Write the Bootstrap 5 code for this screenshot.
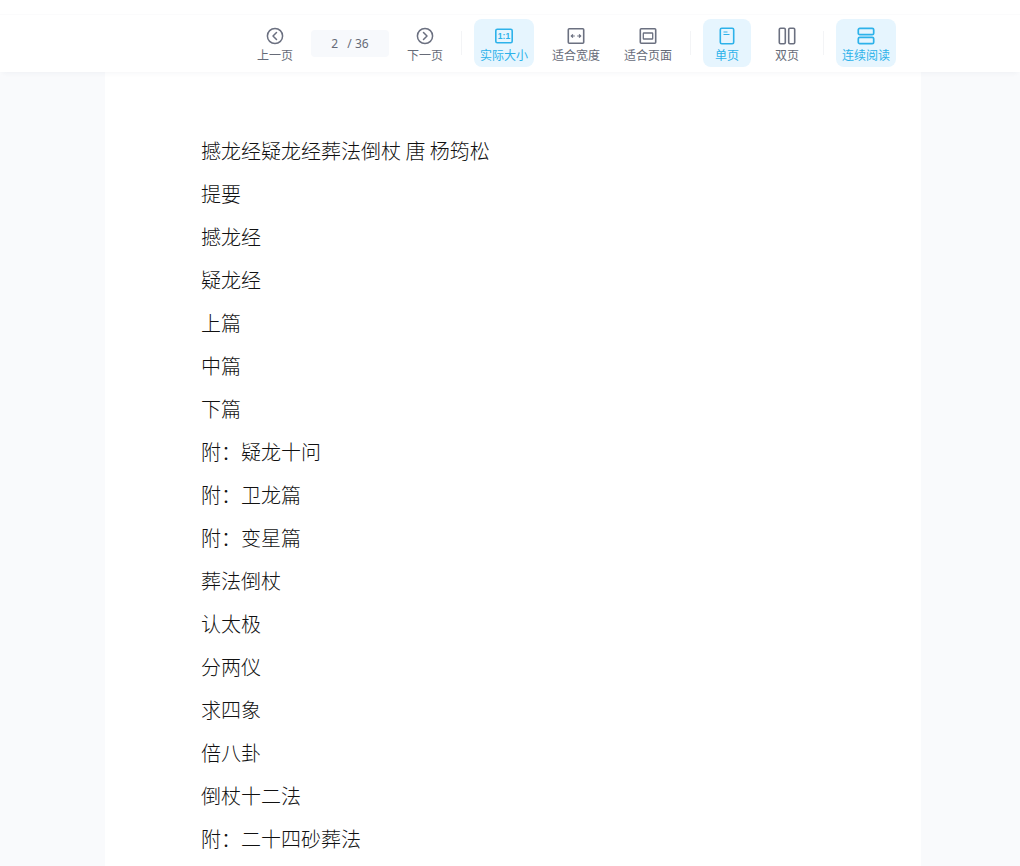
<!DOCTYPE html>
<html lang="zh-CN">
<head>
<meta charset="utf-8">
<title>阅读</title>
<link href="https://cdn.jsdelivr.net/npm/bootstrap@5.3.0/dist/css/bootstrap.min.css" rel="stylesheet">
<style>
html,body{height:866px;overflow:hidden}
body{background:#f9fafc;font-family:"Liberation Sans","Noto Sans CJK SC",sans-serif}
.top-strip{height:15px;background:#fff;border-bottom:1px solid #fbfbfc}
.tool-bar{height:57px;background:#fff;padding-right:124px;padding-top:4px;gap:12px;position:relative;z-index:2;box-shadow:0 4px 5px -3px rgba(40,60,90,.05)}
.tool-btn{min-width:48px;height:48px;padding:7px 6px 0;border-radius:8px;color:#666b78;font-size:12px;line-height:14px;border:0;background:none;font-family:"Noto Sans CJK SC",sans-serif}
.tool-btn svg{display:block;width:20px;height:20px;margin-bottom:2px}
.tool-btn.is-on{background:#e6f5fe;color:#2db2ea}
.tool-btn span{white-space:nowrap}
.page-box{width:78px;height:27px;background:#f7f9fc;border-radius:4px;font-family:"Noto Sans",sans-serif;font-size:12px;color:#666b78;margin-top:11px;white-space:pre}
.tool-sep{width:1px;height:24px;background:#f3f4f6;margin-top:12px}
.icon-label{font-family:"Liberation Sans",sans-serif;font-size:8.500px;font-weight:700;fill:#2db2ea;stroke:none}
.doc-sheet{width:816px;margin-left:105px;height:794px;background:#fff;padding:64px 0 0 96px;overflow:hidden}
.doc-sheet p{font-family:"Noto Sans CJK SC",sans-serif;font-size:20px;font-weight:300;line-height:29px;margin:0 0 14px;color:#111}
</style>
</head>
<body>
<div class="top-strip"></div>
<div class="tool-bar d-flex justify-content-end align-items-start">
  <button class="tool-btn d-flex flex-column align-items-center">
    <svg viewBox="0 0 20 20" fill="none" stroke="#6b7080" stroke-width="1.5"><circle cx="10" cy="10" r="7.600"/><path d="M11.500 6.500 8 10l3.500 3.500" stroke-linecap="round" stroke-linejoin="round"/></svg>
    <span>上一页</span>
  </button>
  <div class="page-box d-flex align-items-center justify-content-center">2   / 36</div>
  <button class="tool-btn d-flex flex-column align-items-center">
    <svg viewBox="0 0 20 20" fill="none" stroke="#6b7080" stroke-width="1.5"><circle cx="10" cy="10" r="7.600"/><path d="M8.500 6.500 12 10l-3.500 3.500" stroke-linecap="round" stroke-linejoin="round"/></svg>
    <span>下一页</span>
  </button>
  <div class="tool-sep"></div>
  <button class="tool-btn is-on d-flex flex-column align-items-center">
    <svg viewBox="0 0 20 20" fill="none" stroke="#2db2ea" stroke-width="1.600"><rect x="1.800" y="3.300" width="16.400" height="13.400" rx="1.500"/><text class="icon-label" x="10" y="13" text-anchor="middle">1:1</text></svg>
    <span>实际大小</span>
  </button>
  <button class="tool-btn d-flex flex-column align-items-center">
    <svg viewBox="0 0 20 20" fill="none" stroke="#6b7080" stroke-width="1.600"><rect x="2.300" y="2.800" width="15.400" height="14.400" rx="1"/><path d="M5.300 10h3.500M6.900 8.400 5.300 10l1.600 1.600M11.200 10h3.500M13.100 8.400l1.600 1.600-1.600 1.600" stroke-width="1.200"/></svg>
    <span>适合宽度</span>
  </button>
  <button class="tool-btn d-flex flex-column align-items-center">
    <svg viewBox="0 0 20 20" fill="none" stroke="#6b7080" stroke-width="1.600"><rect x="2.300" y="2.800" width="15.400" height="14.400" rx="1"/><rect x="5.300" y="7" width="9.400" height="6" rx=".6" stroke-width="1.300"/></svg>
    <span>适合页面</span>
  </button>
  <div class="tool-sep"></div>
  <button class="tool-btn is-on d-flex flex-column align-items-center">
    <svg viewBox="0 0 20 20" fill="none" stroke="#2db2ea" stroke-width="1.600"><rect x="3.300" y="2.300" width="13.400" height="15.400" rx="1.500"/><path d="M6.500 6h4M6.500 8.500h6" stroke-width="1.200"/></svg>
    <span>单页</span>
  </button>
  <button class="tool-btn d-flex flex-column align-items-center">
    <svg viewBox="0 0 20 20" fill="none" stroke="#6b7080" stroke-width="1.600"><rect x="2.300" y="2.300" width="6" height="15.400" rx="1.200"/><rect x="11.700" y="2.300" width="6" height="15.400" rx="1.200"/></svg>
    <span>双页</span>
  </button>
  <div class="tool-sep"></div>
  <button class="tool-btn is-on d-flex flex-column align-items-center">
    <svg viewBox="0 0 20 20" fill="none" stroke="#2db2ea" stroke-width="1.700"><rect x="2.300" y="2.300" width="15.400" height="6.400" rx="1.500"/><rect x="2.300" y="11.300" width="15.400" height="6.400" rx="1.500"/></svg>
    <span>连续阅读</span>
  </button>
</div>
<main class="doc-sheet">
  <p>撼龙经疑龙经葬法倒杖 唐 杨筠松</p>
  <p>提要</p>
  <p>撼龙经</p>
  <p>疑龙经</p>
  <p>上篇</p>
  <p>中篇</p>
  <p>下篇</p>
  <p>附：疑龙十问</p>
  <p>附：卫龙篇</p>
  <p>附：变星篇</p>
  <p>葬法倒杖</p>
  <p>认太极</p>
  <p>分两仪</p>
  <p>求四象</p>
  <p>倍八卦</p>
  <p>倒杖十二法</p>
  <p>附：二十四砂葬法</p>
</main>
<script src="https://cdn.jsdelivr.net/npm/bootstrap@5.3.0/dist/js/bootstrap.bundle.min.js"></script>
</body>
</html>
